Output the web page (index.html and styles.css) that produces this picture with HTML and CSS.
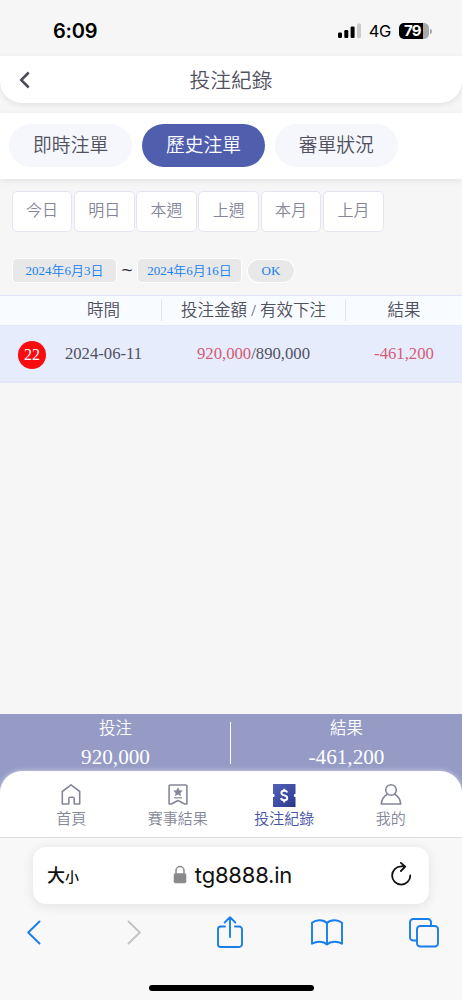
FILE: index.html
```html
<!DOCTYPE html>
<html lang="zh-Hant">
<head>
<meta charset="utf-8">
<meta name="viewport" content="width=device-width, initial-scale=1">
<title>投注紀錄</title>
<link rel="stylesheet" href="styles.css">
</head>
<body>
<div class="phone">
  <div class="status">
    <span class="clock">6:09</span>
    <svg class="signal" width="24" height="16" viewBox="0 0 24 16"><rect x="0" y="9.500" width="4" height="5.500" rx="1.200"/><rect x="6.300" y="7" width="4" height="8" rx="1.200"/><rect x="12.600" y="3.500" width="4" height="11.500" rx="1.200"/><rect x="19" y="0.500" width="4" height="14.500" rx="1.200" fill="#cbcbcb"/></svg>
    <span class="net">4G</span>
    <span class="battery">79</span><span class="cap"></span>
  </div>
  <header class="title-bar">
    <svg class="back" width="12" height="18" viewBox="0 0 12 18"><path d="M10.700 1.500 3.200 9l7.500 7.500" fill="none" stroke="#4c4c5a" stroke-width="2.500"/></svg>
    <h1>投注紀錄</h1>
  </header>
  <div class="tabs">
    <span class="tab">即時注單</span><span class="tab active">歷史注單</span><span class="tab">審單狀況</span>
  </div>
  <div class="ranges">
    <span class="range">今日</span><span class="range">明日</span><span class="range">本週</span><span class="range">上週</span><span class="range">本月</span><span class="range">上月</span>
  </div>
  <div class="dates">
    <span class="date">2024年6月3日</span><span class="tilde">~</span><span class="date">2024年6月16日</span><span class="ok">OK</span>
  </div>
  <div class="row head">
    <span class="cell c1">時間</span><span class="cell c2">投注金額 / 有效下注</span><span class="cell c3">結果</span>
  </div>
  <div class="row body">
    <span class="count">22</span><span>2024-06-11</span><span><span class="red">920,000</span>/890,000</span><span class="red">-461,200</span>
  </div>
  <div class="space"></div>
  <div class="summary">
    <div class="total"><span>投注</span><b>920,000</b></div>
    <i class="rule"></i>
    <div class="total"><span>結果</span><b>-461,200</b></div>
  </div>
  <div class="nav-back">
    <nav class="nav">
      <span class="item"><svg width="24" height="24" viewBox="0 0 24 24" fill="none" stroke="#858799" stroke-width="1.600" stroke-linejoin="round"><path d="M3.300 8.500 12 1.800l8.700 6.700v12.500h-5.500v-5.200a1.500 1.500 0 0 0-1.500-1.500h-2.400a1.500 1.500 0 0 0-1.500 1.500v5.200H3.300z"/></svg>首頁</span>
      <span class="item"><svg width="24" height="24" viewBox="0 0 24 24" fill="none" stroke="#858799" stroke-width="1.600" stroke-linejoin="round"><path d="M4.300 2h15.400q1.500 0 1.200 1.700v17.300h-2.200L12 17.500 5.300 21H3.100V3.700Q2.800 2 4.300 2z"/><path d="m12 4.200 1.500 3 3.300.4-2.400 2.300.6 3.300-3-1.600-3 1.600.6-3.300-2.400-2.300 3.300-.4z" fill="#858799" stroke="none"/><path d="M8 14.800h8" stroke-width="1.200"/></svg>賽事結果</span>
      <span class="item on"><svg width="24" height="24" viewBox="0 0 24 24"><defs><linearGradient id="ticket" x1="0" y1="0" x2="1" y2="1"><stop offset="0" stop-color="#5361b6"/><stop offset=".55" stop-color="#3d4ba5"/><stop offset="1" stop-color="#2a3784"/></linearGradient></defs><path d="M1 1h22.500v9.800a1.700 1.700 0 0 0 0 3.400V24H1v-9.800a1.700 1.700 0 0 0 0-3.400z" fill="url(#ticket)"/><path d="M15.200 9.500c-.4-1.300-1.600-1.700-3-1.700-1.700 0-2.800.8-2.800 2.200 0 3.300 5.800 1.400 5.800 4.900 0 1.500-1.200 2.300-3 2.300-1.700 0-2.900-.7-3.200-2.200M12.200 5.700V8m0 9v2.400" fill="none" stroke="#fff" stroke-width="2"/></svg>投注紀錄</span>
      <span class="item"><svg width="24" height="24" viewBox="0 0 24 24" fill="none" stroke="#858799" stroke-width="1.600" stroke-linejoin="round"><circle cx="12" cy="7" r="5.300"/><path d="M8.500 11.200C5 13 2.700 16.500 2.300 21h19.400c-.4-4.500-2.700-8-6.200-9.800"/></svg>我的</span>
    </nav>
  </div>
  <div class="browser">
    <div class="address">
      <span class="aa">大<small>小</small></span>
      <span class="host"><svg width="14" height="20" viewBox="0 0 14 20"><path d="M3 9V5.500a4 4 0 0 1 8 0V9" fill="none" stroke="#8a8a8c" stroke-width="1.500"/><rect x=".7" y="8.300" width="12.600" height="10" rx="1.800" fill="#8a8a8c"/></svg>tg8888.in</span>
      <svg class="reload" width="24" height="26" viewBox="0 0 24 26" fill="none" stroke="#111" stroke-width="1.800" stroke-linecap="round" stroke-linejoin="round"><path d="M21.300 13.500a9.100 9.100 0 1 1-9.100-9.100h3.800M11.900.9 16.200 4.600 11.900 9"/></svg>
    </div>
    <div class="tools">
      <svg class="prev" width="14" height="26" viewBox="0 0 14 26"><path d="M12.500 2.500 1.200 13.500l11.300 11"/></svg>
      <svg class="next" width="14" height="26" viewBox="0 0 14 26"><path d="m1.500 2.500 11.300 11-11.300 11"/></svg>
      <svg class="share" width="28" height="34" viewBox="0 0 28 34"><path d="M9 11.500H4.800A2.800 2.800 0 0 0 2 14.300v14.900a2.800 2.800 0 0 0 2.800 2.800h18.400a2.800 2.800 0 0 0 2.800-2.800V14.300a2.800 2.800 0 0 0-2.800-2.800H19M14 22V2.200M8.700 7.500 14 2.200l5.300 5.300"/></svg>
      <svg width="32" height="28" viewBox="0 0 32 28"><path d="M16 5C12.500 1.300 5 1.300 1 4.700v21c4.500-2.700 11.500-2.700 15 .8 3.500-3.500 10.500-3.500 15-.8v-21C27 1.300 19.500 1.300 16 5v21.500"/></svg>
      <svg width="32" height="31" viewBox="0 0 32 31"><path d="M9 23.500H5.300A3.300 3.300 0 0 1 2 20.200V5.300A3.300 3.300 0 0 1 5.300 2h14.400A3.300 3.300 0 0 1 23 5.300V9"/><rect x="9" y="9" width="21" height="20.500" rx="3.300"/></svg>
    </div>
    <div class="home-bar"></div>
  </div>
</div>
</body>
</html>
```
FILE: styles.css
```css
* { box-sizing: border-box; }
body { margin: 0; background: #f6f6f6; font-family: "Liberation Serif", "Noto Sans CJK TC", serif; font-weight: 350; color: #50515e; }
.phone { display: flex; flex-direction: column; width: 462px; height: 1000px; overflow: hidden; }
svg { display: block; flex: none; }
.status { display: flex; align-items: center; height: 56px; padding: 6px 32px 0 53px; font-family: Inter, sans-serif; color: #000; }
.clock { flex: 1; font-size: 20px; font-weight: 600; letter-spacing: -.2px; }
.net { margin: 0 8px 0 7px; font-size: 16.500px; font-weight: 400; letter-spacing: -.3px; }
.battery { width: 30px; height: 16px; padding-left: 5px; border-radius: 5px; background: linear-gradient(90deg, #000 24px, #aaa 24px); color: #fff; font-size: 15px; font-weight: 700; line-height: 16px; letter-spacing: -.8px; }
.cap { width: 2px; height: 5px; margin: 0 -2px 0 1px; border-radius: 0 2px 2px 0; background: #aaa; }
.title-bar { display: flex; align-items: center; height: 47px; padding: 0 18px; background: #fff; border-radius: 0 0 22px 22px; box-shadow: 0 2px 6px #00000016; }
.title-bar h1 { flex: 1; margin: 0 12px 0 0; padding-top: 3px; text-align: center; font-size: 20.700px; font-weight: 350; line-height: 30px; }
.tabs { display: flex; gap: 9.500px; height: 66px; margin-top: 10px; padding: 11px 9px; background: #fff; box-shadow: 0 2px 6px #00000014; }
.tab { width: 123.300px; height: 43px; border-radius: 22px; background: #f6f7fd; font-size: 18.800px; line-height: 44px; text-align: center; }
.tab.active { background: #505eae; color: #fff; }
.ranges { display: flex; gap: 1.500px; margin: 11.500px 0 0 11.500px; }
.range { width: 60.800px; height: 41px; border: 1.500px solid #e4e4f3; border-radius: 5px; background: #fff; color: #858799; font-size: 16px; line-height: 38px; text-align: center; }
.dates { display: flex; align-items: center; height: 25px; margin: 26px 0 0 12px; color: #1681ef; font-size: 13px; }
.date { width: 105px; height: 25px; border: 1px solid #fff; border-radius: 5px; background: #e8e8e8; line-height: 24px; text-align: center; }
.tilde { width: 20px; text-align: center; color: #333; font: 400 19px/22px "Liberation Sans", sans-serif; }
.ok { width: 46px; height: 22px; margin: 1px 0 0 6px; border-radius: 11px; background: #e8e8e8; box-shadow: 0 0 0 1px #fff; line-height: 22px; text-align: center; }
.row { display: grid; grid-template-columns: 161px 185px 116px; align-items: center; text-align: center; font-size: 16.500px; }
.head { height: 31px; margin-top: 12px; border-top: 1.500px solid #e1e4f7; border-bottom: 1.500px solid #e1e7fc; background: #f8fbff; }
.cell { height: 22px; line-height: 23px; }
.cell.c1 { padding-left: 46px; }
.cell.c2 { border: solid #dfe4f2; border-width: 0 1px; }
.body { grid-template-columns: 46px 115px 185px 116px; height: 57px; padding-top: 2px; background: #e7ecfd; border-bottom: 2px solid #e3e6f8; font-size: 16.700px; }
.count { justify-self: end; width: 28px; height: 28px; margin-top: 2px; border-radius: 50%; background: #fb0a10; color: #fff; font-size: 16px; line-height: 28px; }
.red { color: #d45c75; }
.space { flex: 1; }
.summary { display: flex; height: 57px; background: #959bc5; color: #fff; }
.total { flex: 1; display: flex; flex-direction: column; align-items: center; font-size: 16.500px; line-height: 26px; padding-top: 2px; }
.total b { font-size: 21.200px; font-weight: 400; line-height: 30px; }
.rule { width: 1px; height: 42px; margin: 8px 0 0 -1px; background: #fff; }
.nav-back { height: 66px; background: linear-gradient(#959bc5 16px, #fff 26px); }
.nav { display: flex; height: 66px; padding: 12px 18px 0; border-radius: 22px 22px 0 0; background: #fff; box-shadow: 0 0 5px #d3d6eb; }
.item { flex: 1; display: flex; flex-direction: column; align-items: center; color: #858799; font-size: 15px; line-height: 24px; }
.item.on { color: #4854a5; }
.browser { height: 163px; padding-top: 9px; border-top: 1px solid #ddd; background: #f8f8f8; }
.address { display: flex; align-items: center; width: 396px; height: 57px; margin: 0 33px; padding: 0 16px 2px 14px; border-radius: 13px; background: #fff; box-shadow: 0 2px 12px #00000018; color: #111; }
.aa { width: 60px; font: 500 18px/28px "Noto Sans CJK TC", sans-serif; white-space: nowrap; }
.aa small { font-size: 14px; }
.host { flex: 1; display: flex; align-items: center; justify-content: center; gap: 8px; padding-right: 31px; font: 400 22px/28px Inter, sans-serif; letter-spacing: -.2px; }
.tools { display: flex; align-items: center; justify-content: space-between; height: 34px; margin-top: 11px; padding: 0 22px 0 18px; fill: none; stroke: #187fea; stroke-width: 1.900; stroke-linecap: round; stroke-linejoin: round; }
.tools .prev { margin: 0 9px; }
.tools .next { margin: 0 7px 0 11px; stroke: #c3c3c5; }
.tools .share { margin: 0 1px 0 3px; }
.home-bar { width: 165px; height: 6px; margin: 36px auto 0; border-radius: 3px; background: #000; }
```
